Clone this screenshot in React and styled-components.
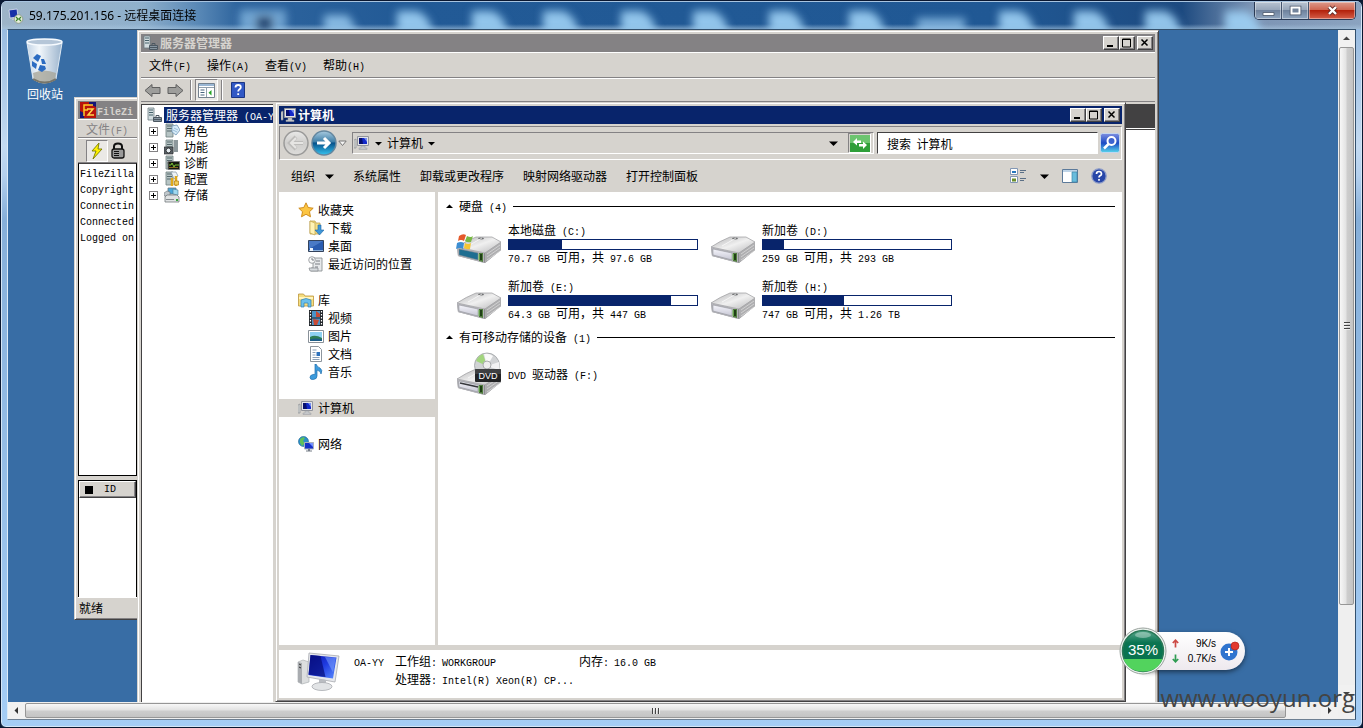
import React from 'react';
import styled, { createGlobalStyle, css } from 'styled-components';

const c = {
  face: '#d6d3ce',
  light: '#ffffff',
  shadow: '#848284',
  dark: '#424142',
  navy: '#08246b',
  desktop: '#386da5',
};

const Global = createGlobalStyle`
  *, *::before, *::after { box-sizing: border-box; }
  body {
    margin: 0;
    background: #0b1a33;
    color: #000;
    font: 12px/16px "Noto Sans CJK SC", "Liberation Sans", sans-serif;
    overflow: hidden;
  }
  button, input { font: inherit; color: inherit; }
  button { padding: 0; border: 0; background: none; }
  a { color: inherit; text-decoration: none; }
  ul { margin: 0; padding: 0; list-style: none; }
  svg { display: block; flex: none; }
`;

/* Latin runs take half the width of a Chinese character */
const Half = styled.span`
  font-family: "Liberation Mono", monospace;
  font-size: 10px;
  line-height: 1;
  white-space: pre;
`;

function Text({ children }) {
  return children
    .split(/([\x20-\x7e]+)/)
    .filter(Boolean)
    .map((run, i) => (/^[\x20-\x7e]/.test(run) ? <Half key={i}>{run}</Half> : run));
}

/* ---------- Remote desktop frame ---------- */

const Frame = styled.div`
  position: relative;
  display: flex;
  flex-direction: column;
  height: 100vh;
  padding: 0 6px 7px;
  border: 1px solid #0a1730;
  border-radius: 7px 7px 6px 6px;
  background: linear-gradient(#8fb4dc, #c3daf1 20%, #b4d0ee 24%, #86afd9 30%, #a5cdf5);
  box-shadow: inset 0 0 0 1px #d5e6f5;
  overflow: hidden;
`;

const Caption = styled.header`
  position: relative;
  display: flex;
  align-items: center;
  flex: none;
  height: 28px;
  margin: 0 -5px;
  padding-left: 6px;
  overflow: hidden;
  border-top: 1px solid #a8c4e0;
  background:
    linear-gradient(transparent 22px, rgba(170, 200, 225, 0.6)),
    linear-gradient(90deg, #9db4c8 0, #8fb0cc 140px, #5585b4 200px, #2f659e 235px, #225a96 400px, #205894 1000px, #1d4a80 1180px, #7c94b4 1250px, #8ba3c0);
`;

const Haze = styled.svg`
  position: absolute;
  left: 0;
  top: 0;
`;

const CaptionIcon = styled.span`
  position: relative;
`;

const CaptionTitle = styled.h1`
  position: relative;
  flex: 1;
  margin: 0 0 0 5px;
  font: 400 12px/16px "Noto Sans", "Noto Sans CJK SC", sans-serif;
`;

const CaptionButtons = styled.div`
  position: relative;
  align-self: flex-start;
  display: flex;
  height: 18px;
  margin-right: 5px;
  border: 1px solid #2a3a55;
  border-top: 0;
  border-radius: 0 0 5px 5px;
  overflow: hidden;
`;

const CaptionButton = styled.button`
  display: grid;
  place-items: center;
  width: ${(p) => (p.$close ? 46 : 27)}px;
  border-right: ${(p) => (p.$close ? 0 : '1px solid #44546e')};
  box-shadow: inset 0 0 0 1px rgba(255, 255, 255, 0.4);
  background: ${(p) =>
    p.$close
      ? 'linear-gradient(#dc9a8c, #cf6651 45%, #b3220c 50%, #d5604a)'
      : 'linear-gradient(#b8c3d1, #97a6ba 45%, #6f829d 50%, #90a6c0)'};
`;

const View = styled.div`
  flex: 1;
  min-height: 0;
  display: grid;
  grid-template: minmax(0, 1fr) 17px / minmax(0, 1fr) 17px;
  border: 1px solid #33506d;
  border-left-color: #dceaf6;
  border-bottom-color: #6d7f92;
`;

const Desktop = styled.main`
  position: relative;
  overflow: hidden;
  background: ${c.desktop};
`;

const Scroll = styled.div`
  display: flex;
  flex-direction: ${(p) => (p.$vertical ? 'column' : 'row')};
  background: #efefef;
`;

const ScrollArrow = styled.button`
  display: grid;
  place-items: center;
  flex: none;
  width: 17px;
  height: 17px;
  background: #f1f1f1;
`;

const Thumb = styled.div`
  display: grid;
  place-items: center;
  flex: ${(p) => p.$share} 1 0;
  margin: ${(p) => (p.$vertical ? '0 1px' : '1px 0')};
  border: 1px solid #969696;
  border-radius: 2px;
  background: linear-gradient(${(p) => (p.$vertical ? '90deg' : '180deg')}, #f7f7f7, #e3e3e3 45%, #cdcdcd 55%, #c4c4c4);
`;

const Rest = styled.div`
  flex: ${(p) => p.$share} 1 0;
`;

const Corner = styled.div`
  background: #f0f0f0;
`;

const Shortcut = styled.a`
  position: absolute;
  left: 9px;
  top: 8px;
  display: flex;
  flex-direction: column;
  align-items: center;
  width: 56px;
  color: #fff;
`;

/* ---------- Classic window parts ---------- */

const Window = styled.section`
  position: absolute;
  left: ${(p) => p.$x}px;
  top: ${(p) => p.$y}px;
  width: ${(p) => p.$w}px;
  height: ${(p) => p.$h}px;
  display: flex;
  flex-direction: column;
  padding: 3px;
  border: 1px solid;
  border-color: ${c.face} ${c.dark} ${c.dark} ${c.face};
  box-shadow: inset 1px 1px ${c.light}, inset -1px -1px ${c.shadow};
  background: ${c.face};
  white-space: nowrap;
`;

const TitleBar = styled.header`
  display: flex;
  align-items: center;
  flex: none;
  height: 18px;
  padding: 0 2px;
  background: ${(p) => (p.$active ? c.navy : c.shadow)};
  color: ${(p) => (p.$active ? '#fff' : c.face)};
`;

const Title = styled.h2`
  flex: 1;
  margin: 0 0 0 1px;
  font-size: 12px;
  line-height: 16px;
  font-weight: 700;
  overflow: hidden;
`;

const raised = css`
  border: 1px solid;
  border-color: #fff ${c.dark} ${c.dark} #fff;
  box-shadow: inset -1px -1px ${c.shadow};
  background: ${c.face};
`;

const sunken = css`
  border: 1px solid;
  border-color: ${c.shadow} #fff #fff ${c.shadow};
`;

const WinButton = styled.button`
  ${raised}
  display: grid;
  place-items: center;
  width: 16px;
  height: 14px;
  &:last-child { margin-left: 2px; }
`;

const Band = styled.div`
  display: flex;
  align-items: center;
  flex: none;
  height: ${(p) => p.$h || 24}px;
  padding: 0 8px;
  gap: ${(p) => p.$gap || 0}px;
  border-top: 1px solid #fff;
  border-bottom: 1px solid ${c.shadow};
`;

const Tools = styled.div`
  display: flex;
  align-items: center;
  margin-left: -8px;
`;

const MenuButton = styled.button`
  color: ${(p) => (p.$dim ? c.shadow : 'inherit')};
`;

const ToolButton = styled.button`
  display: grid;
  place-items: center;
  width: 23px;
  height: 22px;
  ${(p) => p.$pressed && css`${sunken} background: #ebe9e6;`}
`;

const Divider = styled.span`
  width: 2px;
  height: 20px;
  margin: 0 3px;
  border-left: 1px solid ${c.shadow};
  border-right: 1px solid #fff;
`;

/* ---------- FileZilla ---------- */

const Log = styled.div`
  flex: 312 1 0;
  padding-left: 1px;
  border: 1px solid #000;
  border-top-color: ${c.dark};
  background: #fff;
  overflow: hidden;
`;

const LogLine = styled.p`
  margin: 0;
  height: 16px;
`;

const Users = styled.div`
  flex: 116 1 0;
  margin-top: 4px;
  border: 1px solid #000;
  border-bottom: 0;
  background: #fff;
`;

const UsersHead = styled.div`
  ${raised}
  display: flex;
  align-items: center;
  gap: 11px;
  height: 17px;
  padding-left: 5px;
`;

const Square = styled.span`
  width: 8px;
  height: 8px;
  background: #000;
`;

const Status = styled.footer`
  flex: none;
  height: 19px;
  padding: 2px 1px;
  border-top: 1px solid #fff;
`;

/* ---------- Server manager ---------- */

const ManagerBody = styled.div`
  flex: 1;
  display: flex;
  gap: 4px;
  margin-top: 2px;
`;

const Tree = styled.ul`
  width: 132px;
  padding: 2px 0 0 5px;
  border: 1px solid ${c.dark};
  border-right: 0;
  background: #fff;
  overflow: hidden;
`;

const TreeRow = styled.li`
  display: flex;
  align-items: center;
  height: 16px;
  padding-left: ${(p) => (p.$root ? 0 : 2)}px;
`;

const TreeLink = styled.a`
  margin-left: 2px;
  padding: 0 2px;
  ${(p) => p.$selected && css`margin-left: 1px; background: ${c.navy}; color: #fff;`}
`;

const Expander = styled.button`
  display: grid;
  place-items: center;
  width: 9px;
  height: 9px;
  margin-right: 6px;
  border: 1px solid ${c.shadow};
`;

const Pane = styled.div`
  flex: 1;
  display: flex;
  flex-direction: column;
  background: #fff;
`;

const PaneHead = styled.div`
  height: 24px;
  margin-bottom: 1px;
  background: ${c.dark};
  box-shadow: 0 1px #fff, 0 2px ${c.dark};
`;

/* ---------- Explorer ---------- */

const AddressRow = styled.div`
  ${sunken}
  display: flex;
  align-items: center;
  flex: none;
  height: 34px;
  margin-top: 2px;
  padding: 0 1px 0 2px;
`;

const RoundButton = styled.button`
  width: 28px;
  height: 28px;
`;

const Address = styled.div`
  ${sunken}
  flex: 1;
  display: flex;
  align-items: center;
  height: 22px;
  margin: 0 3px 0 5px;
  padding: 0 2px 0 1px;
`;

const Crumb = styled.button`
  margin: 0 5px;
`;

const Spacer = styled.span`
  flex: 1;
`;

const RefreshButton = styled.button`
  ${sunken}
  display: grid;
  place-items: center;
  width: 23px;
  height: 20px;
  margin-left: 10px;
`;

const Search = styled.input`
  width: 221px;
  height: 22px;
  padding: 0 9px;
  border: 1px solid;
  border-color: ${c.dark} #fff #fff ${c.dark};
  border-radius: 0;
  background: #fff;
  outline: 0;
  &::placeholder { color: #000; opacity: 1; }
`;

const SearchButton = styled.button`
  margin-left: 2px;
`;

const Commands = styled.div`
  display: flex;
  align-items: center;
  flex: none;
  gap: 19px;
  height: 32px;
  padding: 0 15px 0 12px;
`;

const Command = styled.button`
  display: flex;
  align-items: center;
  gap: 10px;
`;

const ViewTools = styled.div`
  display: flex;
  align-items: center;
  gap: 13px;
`;

const Panes = styled.div`
  flex: 1;
  min-height: 0;
  display: flex;
  background: #fff;
`;

const Nav = styled.nav`
  display: flex;
  flex-direction: column;
  gap: 18px;
  width: 159px;
  padding-top: 9px;
  border-right: 3px solid ${c.face};
`;

const NavLink = styled.a`
  display: flex;
  align-items: center;
  gap: 4px;
  height: 18px;
  padding-left: ${(p) => (p.$child ? 29 : 19)}px;
  background: ${(p) => (p.$selected ? c.face : 'none')};
`;

const Content = styled.div`
  flex: 1;
  padding: 5px 7px 0 8px;
`;

const GroupHead = styled.h3`
  display: flex;
  align-items: center;
  gap: 6px;
  height: 18px;
  margin: 0;
  font-size: 12px;
  font-weight: 400;
  &::after {
    content: "";
    flex: 1;
    height: 1px;
    background: #000;
  }
`;

const Drives = styled.div`
  display: grid;
  grid-template-columns: 242px 242px;
  gap: 12px;
  padding: 6px 0 7px 10px;
`;

const Drive = styled.a`
  display: flex;
  align-items: center;
  gap: 6px;
  height: 44px;
`;

const DriveInfo = styled.div`
  flex: 1;
`;

const DriveName = styled.div`
  line-height: 18px;
`;

const Meter = styled.div`
  height: 11px;
  border: 1px solid ${c.navy};
`;

const Fill = styled.div`
  height: 100%;
  background: ${c.navy};
`;

const DriveSize = styled.div`
  line-height: 14px;
`;

const Details = styled.footer`
  display: flex;
  gap: 14px;
  flex: none;
  height: 53px;
  padding: 2px 0 0 18px;
  border-top: 5px solid ${c.face};
  background: #fff;
`;

const Facts = styled.dl`
  display: grid;
  grid-template-columns: 36px 42px 132px 30px auto;
  grid-auto-rows: 18px;
  gap: 0 5px;
  margin: 0;
  line-height: 18px;
  dd, dt { margin: 0; }
`;

const Processor = styled.dt`
  grid-column: 2;
`;

/* ---------- Floating meter and watermark ---------- */

const Floating = styled.aside`
  position: absolute;
  right: 117px;
  bottom: 52px;
  display: flex;
  align-items: center;
`;

const Pill = styled.div`
  display: flex;
  align-items: center;
  gap: 4px;
  height: 38px;
  margin-left: -24px;
  padding: 0 5px 0 29px;
  border-radius: 0 19px 19px 0;
  background: linear-gradient(#fff, #eee9ee);
  box-shadow: 0 2px 5px rgba(0, 0, 0, 0.5);
`;

const Rates = styled.div`
  display: grid;
  grid-template-columns: 7px 37px;
  align-items: center;
  font: 10px/15px "Liberation Sans", sans-serif;
  text-align: right;
`;

const Watermark = styled.div`
  position: absolute;
  right: 7px;
  bottom: 12px;
  color: #444;
  font: 24px/34px "Open Sans", sans-serif;
`;

/* ---------- Drawings ---------- */

const Tri = ({ d = 'down', color = '#000', s = 7 }) => {
  const rot = { down: 0, up: 180, left: 90, right: -90 }[d];
  return (
    <svg width={s} height={s} viewBox="0 0 7 7">
      <path d="M0 2h7L3.500 5.500z" fill={color} transform={`rotate(${rot} 3.5 3.5)`} />
    </svg>
  );
};

const Grip = ({ vertical }) => (
  <svg width="8" height="8" viewBox="0 0 8 8">
    <g transform={vertical ? 'rotate(90 4 4)' : undefined}>
      <path d="M.500 1v6M3.500 1v6M6.500 1v6" stroke="#444" />
      <path d="M1.500 1v6M4.500 1v6M7.500 1v6" stroke="#fff" strokeWidth=".6" />
    </g>
  </svg>
);

const Computer = ({ w = 16, h = 16 }) => (
  <svg width={w} height={h} viewBox="0 0 16 16">
    <path d="M0 5l2-1v9H0z" fill="#d8dadb" stroke="#8b8d91" strokeWidth=".7" />
    <path d="M3.500 1.500h11v9h-11z" fill="#e3e4e8" stroke="#92959c" />
    <path d="M5 3h8v6H5z" fill="#1329c9" />
    <path d="M5 3h3l1 6H5z" fill="#07106e" />
    <path d="M10 3h3v4z" fill="#7891f0" />
    <path d="M7 11h4v2h2v1.500H5V13h2z" fill="#c4c6c9" stroke="#9a9ca0" strokeWidth=".5" />
  </svg>
);

const BigComputer = () => (
  <svg width="43" height="40" viewBox="0 0 43 40">
    <defs>
      <linearGradient id="scr" x1="0" y1="0" x2="1" y2="1">
        <stop offset="0" stopColor="#0b13a0" />
        <stop offset=".5" stopColor="#1f3be0" />
        <stop offset="1" stopColor="#5b8dff" />
      </linearGradient>
    </defs>
    <path d="M1 10l5-2 6 2v20l-7 2-4-2z" fill="#dcdedf" stroke="#aeb1b4" strokeWidth=".7" />
    <path d="M1 10l4 1v21l-4-2z" fill="#a9acb0" />
    <path d="M2 12l2 1M2 15l2 1" stroke="#333" />
    <path d="M12 1l30 3-4 26-28-5z" fill="#e6e8ec" stroke="#a8abb0" strokeWidth=".8" />
    <path d="M13.500 3l26 2.500-3.500 21-24.500-3.500z" fill="url(#scr)" />
    <path d="M13.500 3l10 1 5 21-17-2.500z" fill="#060d78" opacity=".7" />
    <path d="M28 5l11 .6-3 15z" fill="#86acff" opacity=".5" />
    <path d="M22 27l7 1v5h-7z" fill="#b9bcc1" />
    <ellipse cx="25" cy="34.500" rx="10" ry="4" fill="#e2e4e6" stroke="#a8abb0" strokeWidth=".8" />
  </svg>
);

const Server = () => (
  <svg width="16" height="16" viewBox="0 0 16 16">
    <path d="M1 1h6v12H1z" fill="#d3dde0" stroke="#6e7f84" strokeWidth=".8" />
    <path d="M2 3h4M2 5.500h4M2 8h4" stroke="#456068" />
    <path d="M6.500 10.500h8v4h-8z" fill="#8795a0" stroke="#4c5862" />
    <path d="M9 10V8.500h3V10M6 12.500h9" stroke="#4c5862" fill="none" />
  </svg>
);

const extras = {
  role: (
    <>
      <path d="M8 3l5-1 3 5-4 5-4-3z" fill="#d8ecf8" stroke="#6d96b5" strokeWidth=".8" />
      <path d="M10 5l4 2M9 7l4 2" stroke="#85b0d0" strokeWidth=".8" />
    </>
  ),
  feature: (
    <>
      <path d="M0 8h9v7H0z" fill="#5a6268" stroke="#222" strokeWidth=".6" />
      <circle cx="4.500" cy="11.500" r="2.400" fill="#e7eef2" stroke="#111" strokeWidth=".7" />
      <path d="M10 1h4v12h-4z" fill="#8d989c" />
    </>
  ),
  diag: (
    <>
      <path d="M4 6.500h11.500v8H4z" fill="#15190f" stroke="#777" />
      <path d="M5 10h2l1-2 2 4 1-2h4" stroke="#84d238" fill="none" strokeWidth=".9" />
      <path d="M5 12.500h9" stroke="#b9862b" strokeWidth=".7" />
    </>
  ),
  config: (
    <>
      <path d="M7 1h5l2 4-4 3z" fill="#eef3f6" stroke="#8394a0" strokeWidth=".7" />
      <path d="M8 7v8M12 5v10" stroke="#e0a91b" strokeWidth="2.500" />
      <path d="M10.500 10h4v4h-4z" fill="#f4cf57" stroke="#b27a12" strokeWidth=".7" />
    </>
  ),
};

const TreeIcon = ({ kind }) =>
  kind === 'storage' ? (
    <svg width="16" height="16" viewBox="0 0 16 16">
      <path d="M4 1h8v6H4z" fill="#4aa7db" stroke="#68767d" strokeWidth=".8" />
      <path d="M9 2l5 1v5L9 7z" fill="#9fd8ef" stroke="#467b94" strokeWidth=".6" />
      <path d="M0 6l3-2 3 1v4H0z" fill="#bfc7cb" stroke="#6b7478" strokeWidth=".6" />
      <path d="M1 10l2-2h10l2 2v5H1z" fill="#dfe2e3" stroke="#71787b" strokeWidth=".8" />
      <path d="M2 12.500h8" stroke="#858c90" />
      <path d="M12 12h2v2h-2z" fill="#39a53c" />
    </svg>
  ) : (
    <svg width="16" height="16" viewBox="0 0 16 16">
      <path d="M2 1h7v13H2z" fill="#b6c4c4" stroke="#6d7d7e" strokeWidth=".8" />
      <path d="M3 3h5M3 5.500h5M3 8h5" stroke="#56696c" />
      {extras[kind]}
    </svg>
  );

const Disk = ({ system }) => (
  <svg width="46" height="28" viewBox="0 0 46 28">
    <defs>
      <linearGradient id="top" x1="0" y1="0" x2="1" y2="1">
        <stop offset="0" stopColor="#b3b3b5" />
        <stop offset=".5" stopColor="#f0f0f0" />
        <stop offset="1" stopColor="#b8b8ba" />
      </linearGradient>
      <linearGradient id="front" x1="0" y1="0" x2="0" y2="1">
        <stop offset="0" stopColor="#f6f6fc" />
        <stop offset="1" stopColor="#c6c6d4" />
      </linearGradient>
    </defs>
    <path d="M1 11l27 6 17-11v8L29 27 2 20z" fill="#8d8d90" />
    <path d="M1 11Q10 5 20 1h16l9 5-16 11z" fill="url(#top)" stroke="#9b9b9d" strokeWidth=".7" />
    <path d="M29 17L45 6v8L29 27z" fill="#aeaeb0" />
    <path d="M31 18l13-9M31 21l13-9M31 24l13-9" stroke="#d9d9d9" strokeWidth=".8" />
    <path d="M1 11l27 6v10L2 20z" fill="#b4b4ba" />
    <path d="M3 13l19 4v7L3 19z" fill={system ? '#1f6e91' : 'url(#front)'} stroke="#8b8c92" strokeWidth=".5" />
    <path d="M23 17h4v9l-4-1z" fill="#4f7c3c" />
    <path d="M25 18v6" stroke="#102b0b" strokeWidth="1.500" />
    <path d="M23 18v6" stroke="#7ed05c" strokeWidth=".8" />
    <ellipse cx="25" cy="2.500" rx="3" ry="1" fill="#6f7072" />
    <path d="M12 10l14-8" stroke="#fff" opacity=".7" />
  </svg>
);

const SystemDisk = () => (
  <svg width="46" height="44" viewBox="0 0 46 44">
    <g transform="translate(0 15)">
      <Disk system />
    </g>
    <path d="M3 15q4-3 7-1l-2 6q-3-2-6 0z" fill="#e4592b" />
    <path d="M11 15q4 2 6 0l-2 6q-3 1-6-1z" fill="#78b843" />
    <path d="M1 22q4-2 7 0l-1 6q-3-2-7 0z" fill="#3c8ed2" />
    <path d="M9 22q3 2 6 0l-1 6q-3 1-6-1z" fill="#f6c534" />
  </svg>
);

const PlainDisk = () => (
  <svg width="46" height="44" viewBox="0 0 46 44">
    <g transform="translate(0 15)">
      <Disk />
    </g>
  </svg>
);

const DvdDisk = () => (
  <svg width="46" height="44" viewBox="0 0 46 44">
    <g transform="translate(0 16)">
      <Disk />
      <path d="M4 15l18 4" stroke="#36373b" strokeWidth="1.500" />
    </g>
    <circle cx="31" cy="13.500" r="12.500" fill="#d1d3d5" stroke="#9b9ea1" strokeWidth=".8" />
    <path d="M31 14L20 9q2-5 7-7z" fill="#a2d57e" />
    <path d="M31 14L28 2q5-1 9 2z" fill="#fafafa" />
    <path d="M31 14l12-4q1 4 0 8z" fill="#f2f2f3" />
    <circle cx="31" cy="13" r="4" fill="#eee" stroke="#a9abad" />
    <rect x="19" y="17" width="26" height="13" rx="1" fill="#222325" />
    <path d="M19 17h26v5H19z" fill="#4a4b4d" opacity=".7" />
    <text x="32" y="27" fill="#fff" fontSize="9" fontFamily="Liberation Sans, sans-serif" textAnchor="middle">DVD</text>
  </svg>
);

const navIcons = {
  star: <path d="M8 .800l2.200 4.700 5 .7-3.700 3.500 1 5.100L8 12.300l-4.500 2.500 1-5.100L.800 6.200l5-.7z" fill="#fcc543" stroke="#c98413" strokeWidth=".9" />,
  downloads: (
    <>
      <path d="M2 1h5l1 2h4v11H2z" fill="#f3df87" stroke="#b7973d" strokeWidth=".7" />
      <path d="M2 1l5 2v12l-5-2z" fill="#fff3b5" stroke="#b7973d" strokeWidth=".6" />
      <path d="M10 5h3v5h3l-4.500 5L7 10h3z" fill="#3f97d8" stroke="#1f64a6" strokeWidth=".6" />
    </>
  ),
  desk: (
    <>
      <path d="M.500 2.500h15v11H.500z" fill="#2a5cb0" stroke="#34435c" />
      <path d="M1 3h14L1 11z" fill="#5888d0" opacity=".7" />
      <path d="M1 12h14v1H1z" fill="#8fb3dc" />
      <path d="M2 10h3v3H2z" fill="#eff6ff" />
    </>
  ),
  recent: (
    <>
      <path d="M5 2h9v13H3v-3h2z" fill="#e7e9eb" stroke="#84888c" strokeWidth=".8" />
      <circle cx="4" cy="4" r="3.300" fill="#f9fafa" stroke="#8a8e92" strokeWidth=".8" />
      <path d="M4 2v2h2M8 5h4M7 8h5M7 11h3" stroke="#6d7378" fill="none" strokeWidth=".9" />
      <path d="M1 12h9v3H2z" fill="#d8dcdf" stroke="#84888c" strokeWidth=".7" />
    </>
  ),
  library: (
    <>
      <path d="M.500 2h5l1.500 2h8.500v10H.500z" fill="#f5dd7e" stroke="#bb963c" strokeWidth=".8" />
      <path d="M1 5h14v2H1z" fill="#fff5be" />
      <path d="M3 15V8q5-3 10 0v7h-3v-4H6v4z" fill="#6bc0ec" stroke="#2f7fb5" strokeWidth=".7" />
    </>
  ),
  video: (
    <>
      <path d="M1 0h14v16H1z" fill="#23272c" />
      <path d="M4 1h8v6.500H4zM4 8.500h8V15H4z" fill="#4b94c8" />
      <path d="M8 1l4 3v3H8zM5 9l6 1-2 5H6z" fill="#c84a35" />
      <path d="M2.500 1v15M13.500 1v15" stroke="#fff" strokeDasharray="1.500 1.500" strokeWidth="1.200" />
    </>
  ),
  picture: (
    <>
      <path d="M.500 2.500h15v12H.500z" fill="#fff" stroke="#899199" />
      <path d="M2 4h12v9H2z" fill="#8ed1f2" />
      <path d="M2 9q5-3 12 1v3H2z" fill="#2c7d55" />
      <path d="M2 11.500q6-2 12 0V13H2z" fill="#1b5c86" />
    </>
  ),
  document: (
    <>
      <path d="M2.500.500h8l3 3v12h-11z" fill="#fff" stroke="#8d959d" />
      <path d="M4.500 4h4M4.500 6.500h3M4.500 9h3M4.500 11.500h7M4.500 13.500h7" stroke="#6c87a5" strokeWidth=".8" />
      <path d="M8.500 6h3.500v4H8.500z" fill="#2e72bd" />
    </>
  ),
  music: (
    <path d="M8 0q1 3 4 4 3 2 1 6 0-3-4-4v6q0 3-3.500 3.500Q2 16 2 13.500 2 11 5 10.500q1.500-.3 2 0V0z" fill="#3c9bdc" stroke="#1f6eae" strokeWidth=".7" />
  ),
  network: (
    <>
      <circle cx="5.500" cy="5.500" r="5" fill="#2b8fc9" stroke="#17618d" strokeWidth=".6" />
      <path d="M2 3q3-3 5-1L5 5l2 2-3 3-2-3z" fill="#5fc05a" />
      <path d="M6.500 6.500h9v6.500h-9z" fill="#1530c8" stroke="#a9b0bd" />
      <path d="M11 7h4v4z" fill="#7592ff" />
      <path d="M10 13h2v1.500h2v1H8v-1h2z" fill="#777e88" />
    </>
  ),
};

const NavIcon = ({ kind }) =>
  kind === 'computer' ? (
    <Computer />
  ) : (
    <svg width="16" height="16" viewBox="0 0 16 16">{navIcons[kind]}</svg>
  );

const RecycleBin = () => (
  <svg width="38" height="48" viewBox="0 0 38 48">
    <defs>
      <linearGradient id="bin" x1="0" x2="1">
        <stop offset="0" stopColor="#c3d4e6" />
        <stop offset=".35" stopColor="#f2f7fb" />
        <stop offset="1" stopColor="#9cb4cd" />
      </linearGradient>
    </defs>
    <path d="M1 5l6 36q11 8 23 0l6-36z" fill="url(#bin)" stroke="#dfe9f2" />
    <path d="M7 35q11-5 23 0l-1 7q-11 7-21 0z" fill="#a7a69a" opacity=".8" />
    <path d="M7 41q12 7 23 0" stroke="#77756a" fill="none" strokeWidth="2" />
    <ellipse cx="18.500" cy="4" rx="17.500" ry="3" fill="#b5c6d8" stroke="#f7fbff" strokeWidth="1.500" />
    <g fill="#2c6cc2">
      <path d="M7 20l4-4 4 2-3 6z" />
      <path d="M6 23l5 3-1 5-4-3z" />
      <path d="M14 27l5 1 1 3-4 3-4-2z" />
      <path d="M15 21l3 0 2 5-4 0z" />
    </g>
  </svg>
);

const RemoteIcon = () => (
  <svg width="16" height="16" viewBox="0 0 16 16">
    <path d="M1 2l8-1 1 8-8 1z" fill="#1831a8" stroke="#dfe5ef" strokeWidth=".8" />
    <path d="M5 10l5-1v3H4z" fill="#c9ced6" />
    <circle cx="10.500" cy="11" r="4.300" fill="#e6eedc" stroke="#8b9781" strokeWidth=".8" />
    <path d="M8 9l2 2-2 2M13 9l-2 2 2 2" stroke="#3d852b" fill="none" strokeWidth="1.200" />
  </svg>
);

const FileZillaIcon = () => (
  <svg width="16" height="16" viewBox="0 0 16 16">
    <path d="M0 0h16v16H0z" fill="#b8130d" />
    <path d="M9 0h7v5L9 2zM0 9l4 2v5H0z" fill="#151578" />
    <path d="M4 14V3h9M4 8h4" stroke="#ffca28" strokeWidth="1.500" fill="none" />
    <path d="M7 7h6l-5 6h6" stroke="#ffd84a" strokeWidth="1.500" fill="none" />
  </svg>
);

const Bolt = () => (
  <svg width="14" height="18" viewBox="0 0 14 18">
    <path d="M9 1L2 9h4l-3 8 9-10H8z" fill="#fff200" stroke="#777a00" strokeWidth=".9" />
  </svg>
);

const Lock = () => (
  <svg width="14" height="17" viewBox="0 0 14 17">
    <path d="M3 8V4.500q0-3 4-3t4 3V8" fill="none" stroke="#111" strokeWidth="2" />
    <rect x="1" y="7" width="12" height="9" rx="2" fill="#999" stroke="#111" strokeWidth="1.300" />
    <path d="M3 9.500h5M3 11.500h5M3 13.500h5" stroke="#111" />
  </svg>
);

const Arrow = ({ flip }) => (
  <svg width="17" height="15" viewBox="0 0 17 15">
    <path
      d="M1 7.500L8 1.500v3h8v6H8v3z"
      fill="#9d9d9b"
      stroke="#5f5f5f"
      transform={flip ? 'rotate(180 8.5 7.5)' : undefined}
    />
  </svg>
);

const PanelIcon = () => (
  <svg width="17" height="15" viewBox="0 0 17 15">
    <path d="M.500.500h16v14H.500z" fill="#fff" stroke="#74818e" />
    <path d="M1 1h15v2H1z" fill="#9ab7d4" />
    <path d="M1 4.500h15M8.500 5v9" stroke="#91a0ad" />
    <path d="M2.500 7h4M2.500 9.500h4M2.500 12h4" stroke="#48647f" />
    <path d="M13.500 7v5.500L10.500 9.800z" fill="#26a326" />
  </svg>
);

const HelpSquare = () => (
  <svg width="14" height="16" viewBox="0 0 14 16">
    <path d="M.500.500h13v15H.500z" fill="#3158c5" stroke="#1b3584" />
    <path d="M4.500 5.500q0-2.500 2.700-2.500 2.600 0 2.600 2.300 0 1.400-1.500 2.100-1.100.7-1.100 2.100M7.200 11.200v1.800" fill="none" stroke="#fff" strokeWidth="1.800" />
  </svg>
);

const RoundArrow = ({ forward }) => (
  <svg width="28" height="28" viewBox="0 0 28 28">
    <defs>
      <linearGradient id="fwd" x1="0" y1="0" x2="0" y2="1">
        <stop offset="0" stopColor="#a9cbe0" />
        <stop offset=".45" stopColor="#3f7fa8" />
        <stop offset=".5" stopColor="#06518b" />
        <stop offset="1" stopColor="#36c3f0" />
      </linearGradient>
      <linearGradient id="bck" x1="0" y1="0" x2="0" y2="1">
        <stop offset="0" stopColor="#e9e9e8" />
        <stop offset=".5" stopColor="#cfcecc" />
        <stop offset="1" stopColor="#dddcda" />
      </linearGradient>
    </defs>
    <circle cx="14" cy="14" r="12" fill={forward ? 'url(#fwd)' : 'url(#bck)'} stroke={forward ? '#65879f' : '#9a9a99'} strokeWidth="1.500" />
    {!forward && <path d="M21 14H8M14 8l-6 6 6 6" fill="none" stroke="#bdbcba" strokeWidth="4" />}
    <path
      d="M7 14h12M14 9l5 5-5 5"
      fill="none"
      stroke={forward ? '#fff' : '#e6e5e3'}
      strokeWidth={forward ? 3 : 2}
      transform={forward ? undefined : 'rotate(180 14 14)'}
    />
  </svg>
);

const RefreshIcon = () => (
  <svg width="20" height="17" viewBox="0 0 20 17">
    <path d="M0 0h20v17H0z" fill="#2f9f39" />
    <path d="M0 0h20v8H0z" fill="#6cc46f" />
    <path d="M3 7l4-4v2.500h4V8H7v2.500zM17 10l-4 4v-2.500H9V9h4V6.500z" fill="#fff" />
  </svg>
);

const SearchIcon = () => (
  <svg width="20" height="20" viewBox="0 0 20 20">
    <defs>
      <linearGradient id="find" x1="0" y1="0" x2="0" y2="1">
        <stop offset="0" stopColor="#7e8fe0" />
        <stop offset=".5" stopColor="#1c4bc4" />
        <stop offset="1" stopColor="#58d6ec" />
      </linearGradient>
    </defs>
    <rect x=".500" y=".500" width="19" height="19" rx="2" fill="url(#find)" stroke="#c2d5ee" />
    <circle cx="11.500" cy="8" r="4" fill="#3d63cf" stroke="#fff" strokeWidth="2" />
    <path d="M8.500 11L4 15.500" stroke="#fff" strokeWidth="2.500" />
  </svg>
);

const ViewIcon = () => (
  <svg width="17" height="16" viewBox="0 0 17 16">
    <path d="M.500.500h7v6h-7zM.500 8.500h7v6h-7z" fill="#fff" stroke="#8297b4" />
    <path d="M2 3h4v2H2z" fill="#2678bd" />
    <path d="M2 10.500h4v3H2z" fill="#6b8d2b" />
    <path d="M10 2.500h6M10 4.500h4M10 10.500h6M10 12.500h4" stroke="#5b6f86" />
  </svg>
);

const PreviewIcon = () => (
  <svg width="16" height="14" viewBox="0 0 16 14">
    <path d="M.500.500h15v13H.500z" fill="#fff" stroke="#5c7a9a" />
    <path d="M1 1h14v2H1z" fill="#bfd4e7" />
    <path d="M10 3h5v10h-5z" fill="#69bcdc" stroke="#3c86ab" strokeWidth=".7" />
  </svg>
);

const HelpRound = () => (
  <svg width="16" height="16" viewBox="0 0 16 16">
    <circle cx="8" cy="8" r="7.200" fill="#2746a8" stroke="#8c9bc8" strokeWidth="1.300" />
    <path d="M5.500 6q0-2.500 2.500-2.500T10.500 6Q10.500 7 9 7.800 8 8.500 8 9.500M8 11v1.700" stroke="#fff" fill="none" strokeWidth="1.700" />
  </svg>
);

const GaugeDrawing = styled.svg`
  position: relative;
`;

const Gauge = () => (
  <GaugeDrawing width="48" height="48" viewBox="0 0 48 48">
    <defs>
      <linearGradient id="ball" x1="0" y1="0" x2="0" y2="1">
        <stop offset="0" stopColor="#59a88c" />
        <stop offset=".3" stopColor="#0a7451" />
        <stop offset="1" stopColor="#08734c" />
      </linearGradient>
    </defs>
    <circle cx="24" cy="24" r="23" fill="#edf3ef" stroke="#9aa39e" />
    <circle cx="24" cy="24" r="20.500" fill="url(#ball)" stroke="#2a7857" strokeWidth="1.500" />
    <path d="M4.500 32h39q-5 12.500-19.500 12.500T4.500 32z" fill="#52d35d" />
    <ellipse cx="24" cy="8" rx="8" ry="3" fill="#fff" opacity=".35" />
    <text x="24" y="28" fill="#fff" fontSize="15" fontFamily="Liberation Sans, sans-serif" textAnchor="middle">35%</text>
  </GaugeDrawing>
);

const RateArrow = ({ up }) => (
  <svg width="7" height="9" viewBox="0 0 7 9">
    <path d="M3.500 8.500V2M.800 4L3.500 1.200 6.200 4" stroke={up ? '#cc4a45' : '#2f9c52'} fill="none" strokeWidth="1.700" transform={up ? undefined : 'rotate(180 3.5 4.5)'} />
  </svg>
);

const PlusBadge = () => (
  <svg width="20" height="22" viewBox="0 0 20 22">
    <circle cx="9" cy="12" r="8.500" fill="#2f74cf" />
    <path d="M9 8v8M5 12h8" stroke="#fff" strokeWidth="2" />
    <circle cx="15" cy="6" r="4" fill="#e3392f" stroke="#b3241d" strokeWidth=".7" />
  </svg>
);

const hazeSpots = [399, 474, 545, 623, 695, 771, 851, 1001, 1076, 1147, 1227];

const CaptionHaze = () => (
  <Haze width="1300" height="28">
    <filter id="soft" x="-20%" y="-50%" width="140%" height="200%">
      <feGaussianBlur stdDeviation="4" />
    </filter>
    <g filter="url(#soft)" fill="#9fd0f5">
      <path d="M238 8h46v22h-46z" opacity=".6" />
      <path d="M254 14h17v14h-17z" fill="#1c436f" />
      <path d="M915 16h48v14h-48z" opacity=".7" />
      <path d="M322 13h24l10 17h-34z" opacity=".8" />
      {hazeSpots.map((x) => (
        <path key={x} d={`M${x - 4} 9h20q12 4 16 22h-36z`} opacity=".9" />
      ))}
    </g>
  </Haze>
);

/* ---------- Content ---------- */

const WindowButtons = () => (
  <>
    <WinButton aria-label="最小化">
      <svg width="10" height="10" viewBox="0 0 10 10"><path d="M1 8h6" stroke="#000" strokeWidth="2" /></svg>
    </WinButton>
    <WinButton aria-label="最大化">
      <svg width="10" height="10" viewBox="0 0 10 10"><path d="M.500 1h8v8h-8zM.500 1.500h8" fill="none" stroke="#000" /></svg>
    </WinButton>
    <WinButton aria-label="关闭">
      <svg width="10" height="10" viewBox="0 0 10 10"><path d="M1.500 1.500l6 6M7.500 1.500l-6 6" stroke="#000" strokeWidth="1.500" /></svg>
    </WinButton>
  </>
);

const logLines = ['FileZilla', 'Copyright', 'Connectin', 'Connected', 'Logged on'];

const FileZilla = () => (
  <Window $x={66} $y={67} $w={67} $h={523}>
    <TitleBar>
      <FileZillaIcon />
      <Title><Text>FileZi</Text></Title>
    </TitleBar>
    <Band $h={19}>
      <MenuButton $dim><Text>文件(F)</Text></MenuButton>
    </Band>
    <Band $h={25}>
      <ToolButton $pressed aria-label="连接"><Bolt /></ToolButton>
      <ToolButton aria-label="锁定"><Lock /></ToolButton>
    </Band>
    <Log>
      {logLines.map((line) => <LogLine key={line}><Text>{line}</Text></LogLine>)}
    </Log>
    <Users>
      <UsersHead><Square /><Text>ID</Text></UsersHead>
    </Users>
    <Status>就绪</Status>
  </Window>
);

const treeItems = [
  ['role', '角色'],
  ['feature', '功能'],
  ['diag', '诊断'],
  ['config', '配置'],
  ['storage', '存储'],
];

const ServerManager = () => (
  <Window $x={129} $y={0} $w={1022} $h={690}>
    <TitleBar>
      <Server />
      <Title>服务器管理器</Title>
      <WindowButtons />
    </TitleBar>
    <Band $gap={16} $h={26}>
      {['文件(F)', '操作(A)', '查看(V)', '帮助(H)'].map((m) => (
        <MenuButton key={m}><Text>{m}</Text></MenuButton>
      ))}
    </Band>
    <Band>
      <Tools>
        <ToolButton aria-label="后退"><Arrow /></ToolButton>
        <ToolButton aria-label="前进"><Arrow flip /></ToolButton>
        <Divider />
        <ToolButton $pressed aria-label="显示/隐藏控制台树"><PanelIcon /></ToolButton>
        <Divider />
        <ToolButton aria-label="帮助"><HelpSquare /></ToolButton>
      </Tools>
    </Band>
    <ManagerBody>
      <Tree>
        <TreeRow $root>
          <Server />
          <TreeLink $selected href="#root"><Text>服务器管理器 (OA-Y</Text></TreeLink>
        </TreeRow>
        {treeItems.map(([kind, label]) => (
          <TreeRow key={kind}>
            <Expander aria-label={`展开${label}`}>
              <svg width="7" height="7" viewBox="0 0 7 7"><path d="M1 3.500h5M3.500 1v5" stroke="#000" /></svg>
            </Expander>
            <TreeIcon kind={kind} />
            <TreeLink href={`#${kind}`}>{label}</TreeLink>
          </TreeRow>
        ))}
      </Tree>
      <Pane><PaneHead /></Pane>
    </ManagerBody>
  </Window>
);

const navGroups = [
  [['star', '收藏夹'], ['downloads', '下载'], ['desk', '桌面'], ['recent', '最近访问的位置']],
  [['library', '库'], ['video', '视频'], ['picture', '图片'], ['document', '文档'], ['music', '音乐']],
  [['computer', '计算机']],
  [['network', '网络']],
];

const drives = [
  { name: '本地磁盘 (C:)', size: '70.7 GB 可用，共 97.6 GB', used: 28, system: true },
  { name: '新加卷 (D:)', size: '259 GB 可用，共 293 GB', used: 11 },
  { name: '新加卷 (E:)', size: '64.3 GB 可用，共 447 GB', used: 86 },
  { name: '新加卷 (H:)', size: '747 GB 可用，共 1.26 TB', used: 43 },
];

const Explorer = () => (
  <Window $x={267} $y={72} $w={851} $h={600}>
    <TitleBar $active>
      <Computer />
      <Title>计算机</Title>
      <WindowButtons />
    </TitleBar>
    <AddressRow>
      <RoundButton aria-label="后退"><RoundArrow /></RoundButton>
      <RoundButton aria-label="前进"><RoundArrow forward /></RoundButton>
      <svg width="9" height="8" viewBox="0 0 9 8"><path d="M.800 2h7.400L4.500 6.500z" fill="#f5f5f4" stroke="#777" /></svg>
      <Address>
        <Computer />
        <Crumb aria-label="位置"><Tri /></Crumb>
        <button>计算机</button>
        <Crumb aria-label="展开"><Tri /></Crumb>
        <Spacer />
        <button aria-label="以前的位置"><Tri s={9} /></button>
        <RefreshButton aria-label="刷新"><RefreshIcon /></RefreshButton>
      </Address>
      <Search aria-label="搜索 计算机" placeholder="搜索  计算机" />
      <SearchButton aria-label="搜索"><SearchIcon /></SearchButton>
    </AddressRow>
    <Commands>
      <Command>组织 <Tri s={9} /></Command>
      <Command>系统属性</Command>
      <Command>卸载或更改程序</Command>
      <Command>映射网络驱动器</Command>
      <Command>打开控制面板</Command>
      <Spacer />
      <ViewTools>
        <Command aria-label="更改视图"><ViewIcon /></Command>
        <Command aria-label="更多视图"><Tri s={9} /></Command>
        <Command aria-label="预览窗格"><PreviewIcon /></Command>
        <Command aria-label="帮助"><HelpRound /></Command>
      </ViewTools>
    </Commands>
    <Panes>
      <Nav>
        {navGroups.map((group) => (
          <ul key={group[0][0]}>
            {group.map(([kind, label], i) => (
              <li key={kind}>
                <NavLink href={`#${kind}`} $child={i > 0} $selected={kind === 'computer'}>
                  <NavIcon kind={kind} />
                  {label}
                </NavLink>
              </li>
            ))}
          </ul>
        ))}
      </Nav>
      <Content>
        <GroupHead><Tri d="up" /><span><Text>硬盘 (4)</Text></span></GroupHead>
        <Drives>
          {drives.map((d) => (
            <Drive key={d.name} href="#drive">
              {d.system ? <SystemDisk /> : <PlainDisk />}
              <DriveInfo>
                <DriveName><Text>{d.name}</Text></DriveName>
                <Meter role="progressbar" aria-label={d.name} aria-valuenow={d.used}>
                  <Fill style={{ width: `${d.used}%` }} />
                </Meter>
                <DriveSize><Text>{d.size}</Text></DriveSize>
              </DriveInfo>
            </Drive>
          ))}
        </Drives>
        <GroupHead><Tri d="up" /><span><Text>有可移动存储的设备 (1)</Text></span></GroupHead>
        <Drives>
          <Drive href="#dvd">
            <DvdDisk />
            <span><Text>DVD 驱动器 (F:)</Text></span>
          </Drive>
        </Drives>
      </Content>
    </Panes>
    <Details>
      <BigComputer />
      <Facts>
        <dt><Text>OA-YY</Text></dt>
        <dt><Text>工作组:</Text></dt>
        <dd><Text>WORKGROUP</Text></dd>
        <dt><Text>内存:</Text></dt>
        <dd><Text>16.0 GB</Text></dd>
        <Processor><Text>处理器:</Text></Processor>
        <dd><Text>Intel(R) Xeon(R) CP...</Text></dd>
      </Facts>
    </Details>
  </Window>
);

export default function App() {
  return (
    <>
      <Global />
      <Frame>
        <Caption>
          <CaptionHaze />
          <CaptionIcon><RemoteIcon /></CaptionIcon>
          <CaptionTitle>59.175.201.156 - 远程桌面连接</CaptionTitle>
          <CaptionButtons>
            <CaptionButton aria-label="最小化">
              <svg width="13" height="14" viewBox="0 0 13 14"><path d="M1 8.500h11v3H1z" fill="#fff" stroke="#4a5568" strokeWidth=".8" /></svg>
            </CaptionButton>
            <CaptionButton aria-label="最大化">
              <svg width="13" height="12" viewBox="0 0 13 12"><path d="M2.500 2.500h8v6h-8z" fill="none" stroke="#4a5568" strokeWidth="3.600" /><path d="M2.500 2.500h8v6h-8z" fill="#73849c" stroke="#fff" strokeWidth="2" /></svg>
            </CaptionButton>
            <CaptionButton $close aria-label="关闭">
              <svg width="13" height="12" viewBox="0 0 13 12"><path d="M3 2l7 7M10 2L3 9" stroke="#5e2a26" strokeWidth="4" /><path d="M3 2l7 7M10 2L3 9" stroke="#fff" strokeWidth="2.400" /></svg>
            </CaptionButton>
          </CaptionButtons>
        </Caption>
        <View>
          <Desktop>
            <Shortcut href="#recycle"><RecycleBin />回收站</Shortcut>
            <FileZilla />
            <ServerManager />
            <Explorer />
          </Desktop>
          <Scroll $vertical>
            <ScrollArrow aria-label="向上滚动"><Tri d="up" color="#444" /></ScrollArrow>
            <Thumb $vertical $share={557}><Grip vertical /></Thumb>
            <Rest $share={80} />
            <ScrollArrow aria-label="向下滚动"><Tri color="#444" /></ScrollArrow>
          </Scroll>
          <Scroll>
            <ScrollArrow aria-label="向左滚动"><Tri d="left" color="#333" /></ScrollArrow>
            <Thumb $share={1261}><Grip /></Thumb>
            <Rest $share={35} />
            <ScrollArrow aria-label="向右滚动"><Tri d="right" color="#333" /></ScrollArrow>
          </Scroll>
          <Corner />
        </View>
        <Floating>
          <Gauge />
          <Pill>
            <Rates>
              <RateArrow up /><span>9K/s</span>
              <RateArrow /><span>0.7K/s</span>
            </Rates>
            <PlusBadge />
          </Pill>
        </Floating>
        <Watermark>www.wooyun.org</Watermark>
      </Frame>
    </>
  );
}
